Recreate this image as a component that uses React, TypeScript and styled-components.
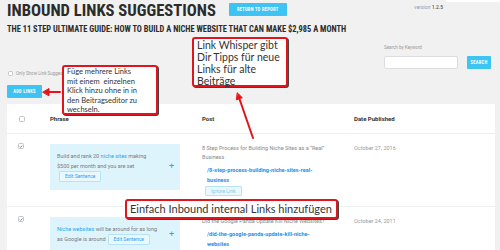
import React from "react";
import styled, { createGlobalStyle } from "styled-components";

const GlobalStyle = createGlobalStyle`
  html, body {
    margin: 0;
    padding: 0;
    background: #f1f1f1;
    overflow: hidden;
  }
`;

const NARROW = `"Liberation Sans Narrow", "Roboto Condensed", Roboto, sans-serif`;
const UI = `Roboto, "Liberation Sans", sans-serif`;
const NOTE = `Lato, "Noto Sans", sans-serif`;
const CYAN = "#3ec3f3";

const Page = styled.div`
  position: relative;
  width: 500px;
  height: 250px;
  box-sizing: border-box;
  padding: 0 5px 0 7px;
  overflow: hidden;
  font-family: ${UI};
`;

const TopBar = styled.div`
  display: flex;
  align-items: flex-start;
  height: 22px;
`;

const Title = styled.h1`
  margin: 3px 0 0;
  font-family: ${NARROW};
  font-weight: 700;
  font-size: 16.6px;
  line-height: 16px;
  color: #2b2b2b;
  white-space: nowrap;
`;

const CyanButton = styled.button<{ $w?: number }>`
  height: 13px;
  width: ${(p) => (p.$w ? `${p.$w}px` : "auto")};
  padding: 0 ${(p) => (p.$w ? 0 : 8)}px;
  border: none;
  border-radius: 1px;
  background: ${CYAN};
  color: #fff;
  font-family: ${NARROW};
  font-weight: 700;
  font-size: 4.5px;
  letter-spacing: 0.3px;
  text-transform: uppercase;
  white-space: nowrap;
`;

const ReturnButton = styled(CyanButton)`
  margin: 3px 0 0 13px;
`;

const Version = styled.div`
  margin: 4px 0 0 auto;
  font-size: 5px;
  line-height: 6px;
  color: #999;
  b {
    color: #555;
    font-weight: 500;
  }
`;

const Tab = styled.div`
  width: 54px;
  height: 2px;
  margin: 0 -5px 0 3px;
  background: #fff;
`;

const Subtitle = styled.h2`
  margin: 3px 0 0;
  font-family: ${NARROW};
  font-weight: 700;
  font-size: 8.4px;
  line-height: 9px;
  color: #2b2b2b;
  white-space: nowrap;
`;

const Controls = styled.div`
  display: flex;
  justify-content: space-between;
  height: 64px;
`;

const LeftCol = styled.div`
  display: flex;
  flex-direction: column;
  align-items: flex-start;
  gap: 9px;
  padding-top: 36px;
`;

const CheckRow = styled.label`
  display: flex;
  align-items: center;
  gap: 3px;
  height: 6px;
  padding-left: 1px;
  font-size: 4.5px;
  color: #999;
  white-space: nowrap;
`;

const Box = styled.span<{ $size: number }>`
  display: inline-flex;
  align-items: center;
  justify-content: center;
  box-sizing: border-box;
  width: ${(p) => p.$size}px;
  height: ${(p) => p.$size}px;
  border: 1px solid #c4c4c4;
  border-radius: 1.5px;
  background: #fff;
`;

const RightCol = styled.div`
  padding-top: 11px;
  margin-right: 4px;
`;

const SearchLabel = styled.div`
  font-size: 4.5px;
  line-height: 6px;
  color: #999;
  margin-bottom: 5px;
`;

const SearchRow = styled.div`
  display: flex;
  gap: 9px;
`;

const SearchInput = styled.div`
  width: 74px;
  height: 13px;
  box-sizing: border-box;
  border: 1px solid #ddd;
  border-radius: 2px;
  background: #fff;
`;

const Card = styled.div`
  margin-top: 6px;
  background: #fff;
`;

const Grid = styled.div<{ $head?: boolean }>`
  display: grid;
  grid-template-columns: 43px 152px 152px 1fr;
  align-items: ${(p) => (p.$head ? "center" : "start")};
  height: ${(p) => (p.$head ? "29px" : "auto")};
  padding: ${(p) => (p.$head ? "0" : "10px 0")};
  border-bottom: 1px solid #efefef;
  font-size: ${(p) => (p.$head ? "6px" : "5.5px")};
  font-weight: ${(p) => (p.$head ? 700 : 400)};
  color: ${(p) => (p.$head ? "#333" : "#888")};
`;

const CheckCell = styled.div<{ $head?: boolean }>`
  padding-left: ${(p) => (p.$head ? 12 : 11)}px;
  margin-top: ${(p) => (p.$head ? 0 : -1)}px;
  display: flex;
`;

const PhraseBox = styled.div`
  display: flex;
  align-items: center;
  width: 130px;
  box-sizing: border-box;
  padding: 7px 6px 8px 7px;
  background: #def4fd;
`;

const PhraseText = styled.div`
  width: 104px;
  font-size: 5.5px;
  line-height: 10px;
  color: #7a7a7a;
  span {
    color: #2ea3f2;
  }
`;

const OutlineButton = styled.span`
  display: inline-block;
  box-sizing: border-box;
  height: 11px;
  padding: 0 5px;
  margin-left: 2px;
  border: 1px solid #b5e4f8;
  border-radius: 1px;
  background: #eaf8fe;
  color: #86cdef;
  font-size: 5px;
  line-height: 9px;
  vertical-align: middle;
`;

const IgnoreButton = styled(OutlineButton)`
  height: 10px;
  line-height: 8px;
  margin: 1px 0 0 3px;
`;

const Plus = styled.span`
  margin-left: auto;
  color: #2ea3f2;
  font-size: 9px;
  line-height: 9px;
`;

const PostTitle = styled.div`
  max-width: 136px;
  line-height: 9px;
`;

const PostLink = styled.div`
  max-width: 118px;
  margin: 3px 0 0 5px;
  font-weight: 700;
  line-height: 10px;
  color: #1e8ef0;
`;

const DateCell = styled.div`
  line-height: 9px;
  color: #9a9a9a;
`;

const Note = styled.div<{ $x: number; $y: number; $w: number; $h: number; $size: number; $lh: number }>`
  position: absolute;
  left: ${(p) => p.$x}px;
  top: ${(p) => p.$y}px;
  width: ${(p) => p.$w}px;
  height: ${(p) => p.$h}px;
  box-sizing: border-box;
  padding: 0 3px;
  border: 2px solid #e3141b;
  border-radius: 3px;
  background: #fff;
  box-shadow: 1px 1px 0 #444;
  font-family: ${NOTE};
  font-size: ${(p) => p.$size}px;
  line-height: ${(p) => p.$lh}px;
  color: #333;
  white-space: nowrap;
`;

const Arrows = styled.svg`
  position: absolute;
  left: 0;
  top: 0;
  pointer-events: none;
`;

const Tick = () => (
  <svg width="5" height="5" viewBox="0 0 10 10">
    <path d="M2 5.2l2.2 2.2L8.2 2.8" fill="none" stroke="#2271b1" strokeWidth="1.8" />
  </svg>
);

const rows = [
  {
    phrase: (
      <>
        Build and rank 20 <span>niche sites</span> making
        <br />
        $500 per month and you are set
      </>
    ),
    title: "8 Step Process for Building Niche Sites as a \u201cReal\u201d Business",
    link: "/8-step-process-building-niche-sites-real-business",
    date: "October 27, 2016",
    ignore: true,
  },
  {
    phrase: (
      <>
        <span>Niche websites</span> will be around for as long
        <br />
        as Google is around
      </>
    ),
    title: "Did the Google Panda Update Kill Niche Websites?",
    link: "/did-the-google-panda-update-kill-niche-websites",
    date: "October 24, 2011",
    ignore: false,
  },
];

export default function App() {
  return (
    <>
      <GlobalStyle />
      <Page>
        <TopBar>
          <Title>INBOUND LINKS SUGGESTIONS</Title>
          <ReturnButton>Return to Report</ReturnButton>
          <Version>
            version <b>1.2.5</b>
          </Version>
          <Tab />
        </TopBar>
        <Subtitle>THE 11 STEP ULTIMATE GUIDE: HOW TO BUILD A NICHE WEBSITE THAT CAN MAKE $2,985 A MONTH</Subtitle>

        <Controls>
          <LeftCol>
            <CheckRow>
              <Box $size={5} />
              Only Show Link Suggestions
            </CheckRow>
            <CyanButton $w={35}>Add Links</CyanButton>
          </LeftCol>
          <RightCol>
            <SearchLabel>Search by Keyword</SearchLabel>
            <SearchRow>
              <SearchInput />
              <CyanButton $w={24}>Search</CyanButton>
            </SearchRow>
          </RightCol>
        </Controls>

        <Card>
          <Grid $head>
            <CheckCell $head>
              <Box $size={6} />
            </CheckCell>
            <div>Phrase</div>
            <div>Post</div>
            <div>Date Published</div>
          </Grid>
          {rows.map((r) => (
            <Grid key={r.link}>
              <CheckCell>
                <Box $size={6}>
                  <Tick />
                </Box>
              </CheckCell>
              <PhraseBox>
                <PhraseText>
                  {r.phrase}
                  <OutlineButton>Edit Sentence</OutlineButton>
                </PhraseText>
                <Plus>+</Plus>
              </PhraseBox>
              <div>
                <PostTitle>{r.title}</PostTitle>
                <PostLink>{r.link}</PostLink>
                {r.ignore && <IgnoreButton>Ignore Link</IgnoreButton>}
              </div>
              <DateCell>{r.date}</DateCell>
            </Grid>
          ))}
        </Card>

        <Note $x={192} $y={37} $w={96} $h={50} $size={10.5} $lh={12}>
          Link Whisper gibt
          <br />
          Dir Tipps für neue
          <br />
          Links für alte
          <br />
          Beiträge
        </Note>
        <Note $x={62} $y={65} $w={96} $h={50} $size={7.5} $lh={9.5}>
          Füge mehrere Links
          <br />
          mit einem&nbsp; einzelnen
          <br />
          Klick hinzu ohne in in
          <br />
          den Beitragseditor zu
          <br />
          wechseln.
        </Note>
        <Note $x={125} $y={199} $w={213} $h={20} $size={11} $lh={16}>
          Einfach Inbound internal Links hinzufügen
        </Note>

        <Arrows width="500" height="250">
          <g fill="#e3141b" stroke="#e3141b" strokeLinecap="round">
            <line x1="60" y1="92" x2="48" y2="92" strokeWidth="2" />
            <polygon points="43,92 49,88.5 49,95.5" />
            <line x1="253" y1="138" x2="239.5" y2="99" strokeWidth="2" />
            <polygon points="237.5,93 242.3,97.7 236.7,99.7" />
          </g>
        </Arrows>
      </Page>
    </>
  );
}
